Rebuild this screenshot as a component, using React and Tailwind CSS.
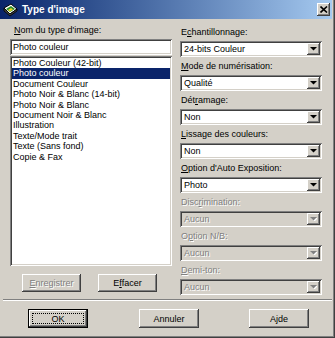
const sunken =
  "shadow-[inset_1px_1px_0_#808080,inset_-1px_-1px_0_#ffffff,inset_2px_2px_0_#404040,inset_-2px_-2px_0_#d4d0c8]";
const raised =
  "shadow-[inset_-1px_-1px_0_#404040,inset_1px_1px_0_#ffffff,inset_-2px_-2px_0_#808080,inset_2px_2px_0_#d4d0c8]";
const etched = "text-[#808080] [text-shadow:1px_1px_0_#ffffff]";

const items = [
  "Photo Couleur (42-bit)",
  "Photo couleur",
  "Document Couleur",
  "Photo Noir & Blanc (14-bit)",
  "Photo Noir & Blanc",
  "Document Noir & Blanc",
  "Illustration",
  "Texte/Mode trait",
  "Texte (Sans fond)",
  "Copie & Fax",
];

const fields = [
  { label: ["E", "c", "hantillonnage:"], value: "24-bits Couleur" },
  { label: ["", "M", "ode de numérisation:"], value: "Qualité" },
  { label: ["Dét", "r", "amage:"], value: "Non" },
  { label: ["", "L", "issage des couleurs:"], value: "Non" },
  { label: ["", "O", "ption d'Auto Exposition:"], value: "Photo" },
  { label: ["Disc", "r", "imination:"], value: "Aucun", disabled: true },
  { label: ["O", "p", "tion N/B:"], value: "Aucun", disabled: true },
  { label: ["", "D", "emi-ton:"], value: "Aucun", disabled: true },
];

function Accel({ parts }) {
  return (
    <>
      {parts[0]}
      <span className="underline underline-offset-[1px]">{parts[1]}</span>
      {parts[2]}
    </>
  );
}

function Arrow({ disabled }) {
  return (
    <svg width="7" height="4" viewBox="0 0 7 4" className="block">
      {disabled && <path d="M1 1h7L4.5 4.5z" fill="#ffffff" />}
      <path d="M0 0h7L3.5 3.5z" fill={disabled ? "#808080" : "#000000"} />
    </svg>
  );
}

function Select({ value, disabled }) {
  return (
    <div
      className={`flex h-[16px] items-center p-[2px] ${sunken} ${
        disabled ? "bg-[#d4d0c8]" : "bg-white"
      }`}
    >
      <span
        className={`flex-1 pl-[2px] leading-[12px] ${
          disabled ? etched : "text-black"
        }`}
      >
        {value}
      </span>
      <div
        className={`flex h-[12px] w-[13px] items-center justify-center bg-[#d4d0c8] ${raised}`}
      >
        <Arrow disabled={disabled} />
      </div>
    </div>
  );
}

function Button({ children, width, height, disabled, isDefault }) {
  if (isDefault) {
    return (
      <div
        className={`${width} ${height} border border-black bg-[#d4d0c8]`}
      >
        <div className={`flex h-full w-full items-center justify-center p-[3px] ${raised}`}>
          <div className="flex h-full w-full items-center justify-center border border-dotted border-black leading-[10px]">
            {children}
          </div>
        </div>
      </div>
    );
  }
  return (
    <div
      className={`flex ${width} ${height} items-center justify-center bg-[#d4d0c8] leading-[10px] ${raised} ${
        disabled ? etched : "text-black"
      }`}
    >
      {children}
    </div>
  );
}

function ScannerIcon() {
  return (
    <svg width="15" height="14" viewBox="0 0 15 14" className="block">
      <path d="M1 5 L8 1 L14 6 L7 11 Z" fill="#ffffff" stroke="#000000" strokeWidth="1" />
      <path d="M3 6 L8 3 L12 6 L7 9 Z" fill="#2d8a2d" />
      <path d="M5 7 L8 5 L10 6.5 L7 8.5 Z" fill="#e8d820" />
      <path d="M1 5 L1 8 L7 13 L14 8 L14 6 L7 11 Z" fill="#404040" stroke="#000000" strokeWidth="0.8" />
    </svg>
  );
}

function CloseIcon() {
  return (
    <svg width="8" height="7" viewBox="0 0 8 7" className="block">
      <path d="M0.5 0.5 L7 6.5 M7 0.5 L0.5 6.5" stroke="#000000" strokeWidth="1.6" />
    </svg>
  );
}

export default function App() {
  return (
    <div
      className="relative flex h-[338px] w-[335px] flex-col bg-[#d4d0c8] text-[9px] text-black shadow-[inset_-1px_-1px_0_#404040,inset_-2px_-2px_0_#808080]"
      style={{ fontFamily: '"Liberation Sans", Arial, sans-serif' }}
    >
      <div className="mr-[3px] flex h-[19px] items-center bg-linear-to-r from-[#0a246a] to-[#a6caf0] pl-[3px] pr-[2px]">
        <ScannerIcon />
        <span className="ml-[4px] flex-1 text-[10px] font-bold leading-[12px] text-white">
          Type d'image
        </span>
        <div className={`flex h-[13px] w-[13px] items-center justify-center bg-[#d4d0c8] ${raised}`}>
          <CloseIcon />
        </div>
      </div>

      <div className="flex h-[280px] gap-[8px] pl-[10px]">
        <div className="mt-[6px] flex w-[162px] flex-col">
          <div className="h-[11px] pl-[4px] leading-[11px]">
            <Accel parts={["", "N", "om du type d'image:"]} />
          </div>
          <div className={`mt-[3px] flex h-[16px] items-center bg-white p-[2px] ${sunken}`}>
            <span className="pl-[1px] leading-[12px]">Photo couleur</span>
          </div>
          <div className={`mt-[1px] h-[210px] bg-white p-[2px] ${sunken}`}>
            {items.map((item, i) => (
              <div
                key={item}
                className={`h-[10.4px] pl-[1px] leading-[10.4px] ${
                  i === 1 ? "bg-[#0a246a] text-white" : "text-black"
                }`}
              >
                {item}
              </div>
            ))}
          </div>
          <div className="mt-[8px] flex gap-[17px] pl-[12px]">
            <Button width="w-[59px]" height="h-[18px]" disabled>
              <Accel parts={["", "E", "nregistrer"]} />
            </Button>
            <Button width="w-[59px]" height="h-[18px]">
              <Accel parts={["E", "f", "facer"]} />
            </Button>
          </div>
        </div>

        <div className="mt-[4px] flex w-[142px] flex-col">
          {fields.map((f) => (
            <div key={f.value + f.label[2]} className="flex h-[34px] flex-col">
              <div
                className={`flex h-[18px] items-end pb-[3px] pl-[1px] leading-[11px] ${
                  f.disabled ? etched : ""
                }`}
              >
                <span>
                  <Accel parts={f.label} />
                </span>
              </div>
              <Select value={f.value} disabled={f.disabled} />
            </div>
          ))}
        </div>
      </div>

      <div className="mx-[3px] h-[2px] border-t border-b border-t-[#808080] border-b-white" />

      <div className="mt-[8px] flex">
        <div className="ml-[28px]">
          <Button width="w-[60px]" height="h-[19px]" isDefault>
            OK
          </Button>
        </div>
        <div className="ml-[51px]">
          <Button width="w-[60px]" height="h-[19px]">
            Annuler
          </Button>
        </div>
        <div className="ml-[50px]">
          <Button width="w-[60px]" height="h-[19px]">
            Ajde
          </Button>
        </div>
      </div>
    </div>
  );
}
